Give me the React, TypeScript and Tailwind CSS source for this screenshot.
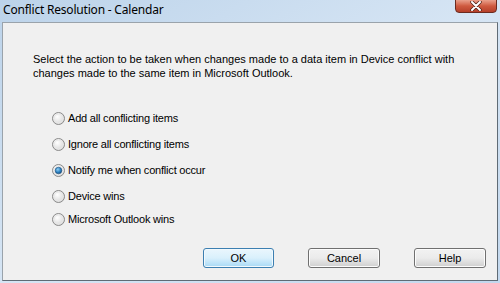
import React from "react";

const options = [
  { label: "Add all conflicting items", mt: "mt-0" },
  { label: "Ignore all conflicting items", mt: "mt-[13px]" },
  { label: "Notify me when conflict occur", mt: "mt-[13px]" },
  { label: "Device wins", mt: "mt-[13px]" },
  { label: "Microsoft Outlook wins", mt: "mt-[10px]" },
];

const Radio = ({ checked }: { checked: boolean }) => (
  <svg width="13" height="13" viewBox="0 0 13 13">
    <defs>
      <radialGradient id="rbg" cx="40%" cy="35%" r="70%">
        <stop offset="0%" stopColor="#ffffff" />
        <stop offset="100%" stopColor="#d4d4d4" />
      </radialGradient>
      <radialGradient id="rdot" cx="40%" cy="35%" r="70%">
        <stop offset="0%" stopColor="#8fd0f5" />
        <stop offset="60%" stopColor="#2a7fc0" />
        <stop offset="100%" stopColor="#164c7e" />
      </radialGradient>
    </defs>
    <circle cx="6.5" cy="6.5" r="6" fill="url(#rbg)" stroke="#8a8a8a" strokeWidth="1" />
    <circle cx="6.5" cy="6.5" r="4.5" fill="none" stroke="#e8e8e8" strokeWidth="1" />
    {checked && <circle cx="6.5" cy="6.5" r="3.3" fill="url(#rdot)" stroke="#1d4f7c" strokeWidth="0.6" />}
  </svg>
);

const Btn = ({ label, primary }: { label: string; primary?: boolean }) => (
  <button
    className={
      primary
        ? "w-[71px] h-[20px] rounded-[3px] border border-[#3c7fb1] bg-gradient-to-b from-[#eaf6fd] via-[#d9f0fc] to-[#a7d9f5] text-[11px] text-black shadow-[inset_0_0_0_1px_#f2f9fd]"
        : "w-[72px] h-[20px] rounded-[3px] border border-[#707070] bg-gradient-to-b from-[#f2f2f2] via-[#ebebeb] to-[#cfcfcf] text-[11px] text-black shadow-[inset_0_0_0_1px_#fcfcfc]"
    }
  >
    {label}
  </button>
);

export default function App() {
  return (
    <div
      className="w-[500px] h-[283px] flex flex-col bg-gradient-to-br from-[#bcd3ea] via-[#d6e5f4] to-[#c3d8ee] overflow-hidden"
      style={{ fontFamily: '"Liberation Sans", Arial, sans-serif' }}
    >
      {/* title bar */}
      <div className="h-[22px] flex items-start justify-between pl-[3px]">
        <span
          className="text-[12px] leading-[16px] pt-[2px] text-black tracking-[-0.2px]"
          style={{ fontFamily: '"Noto Sans", "Open Sans", sans-serif' }}
        >
          Conflict Resolution - Calendar
        </span>
        <div className="w-[42px] h-[14px] -mt-[1px] mr-[3px] rounded-b-[4px] border border-[#6b2b20] bg-gradient-to-b from-[#e9a08c] via-[#cf5a3f] to-[#b5402a] flex items-center justify-center">
          <svg width="12" height="10" viewBox="0 0 12 10">
            <path d="M2 1 L10 9 M10 1 L2 9" stroke="#4a2018" strokeWidth="3.4" strokeLinecap="round" />
            <path d="M2 1 L10 9 M10 1 L2 9" stroke="#ffffff" strokeWidth="2" strokeLinecap="round" />
          </svg>
        </div>
      </div>
      {/* client area */}
      <div className="mx-[2px] mb-[2px] flex-1 bg-[#f0f0f0] border-t border-l border-[#9aa3ab] border-r-[#5f6b75] border-b-[#5f6b75] border-r border-b flex flex-col text-[11px] text-black">
        <p className="pl-[30px] pt-[29px] leading-[14px] whitespace-nowrap">
          Select the action to be taken when changes made to a data item in Device conflict with
          <br />
          changes made to the same item in Microsoft Outlook.
        </p>
        <div className="flex flex-col pl-[49px] pt-[32px]">
          {options.map((o, i) => (
            <label key={o.label} className={`flex items-center gap-[3px] h-[13px] leading-[13px] tracking-[-0.2px] ${o.mt}`}>
              <Radio checked={i === 2} />
              <span>{o.label}</span>
            </label>
          ))}
        </div>
        <div className="flex justify-end gap-[34px] pr-[11px] mt-auto mb-[12px]">
          <Btn label="OK" primary />
          <Btn label="Cancel" />
          <Btn label="Help" />
        </div>
      </div>
    </div>
  );
}
